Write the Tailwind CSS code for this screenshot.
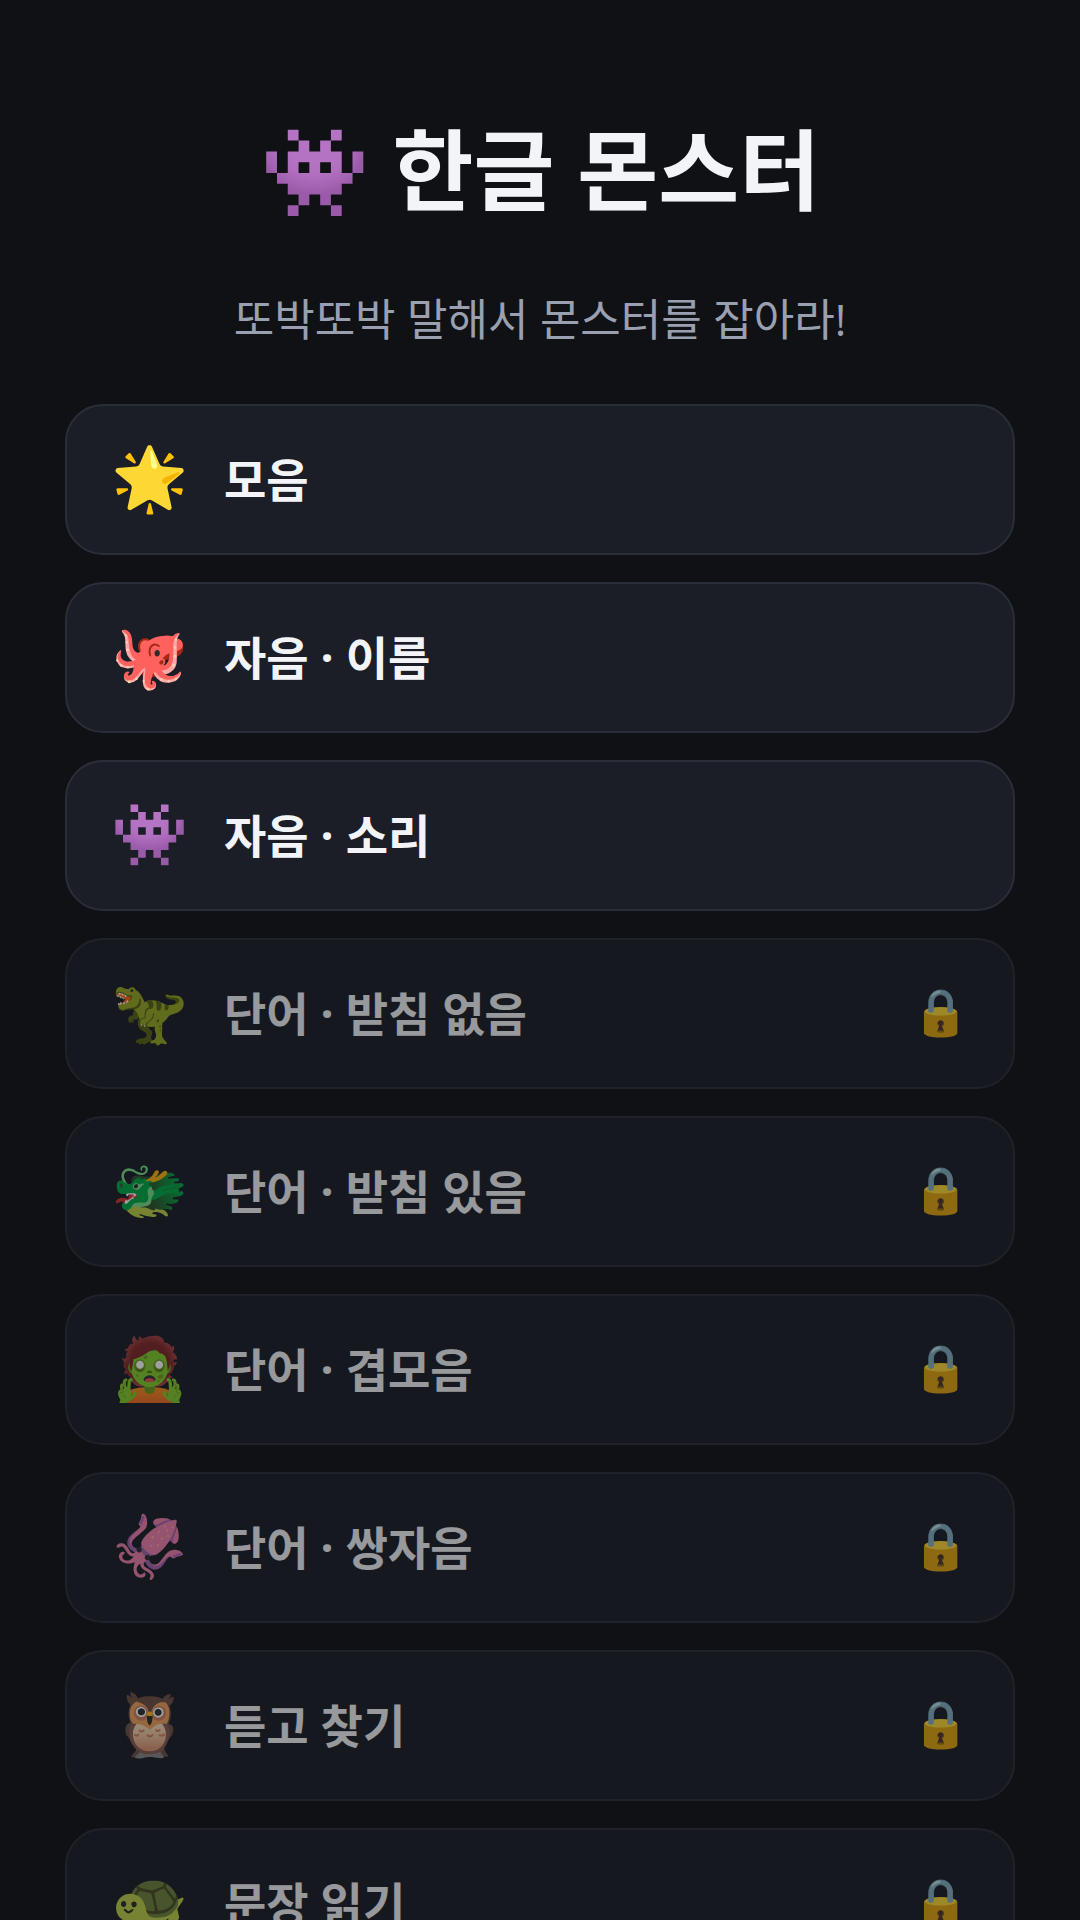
<!DOCTYPE html>
<html lang="ko">
<head>
<meta charset="utf-8">
<meta name="viewport" content="width=device-width, initial-scale=1">
<title>한글 몬스터</title>
<script src="https://cdn.jsdelivr.net/npm/@tailwindcss/browser@4"></script>
</head>
<body class="min-h-screen bg-[#0f1115] text-[#f3f4f8] font-['Open_Sans','Noto_Sans_CJK_KR',sans-serif]">
<main class="px-[65px] pt-[105px] pb-16">
  <header class="text-center">
    <h1 class="text-[88px] leading-[128px] font-bold">👾 한글 몬스터</h1>
    <p class="mt-[54px] text-[44px] leading-[64px] text-[#9aa0b0]">또박또박 말해서 몬스터를 잡아라!</p>
  </header>
  <nav class="mt-[53px] flex flex-col gap-[27px]">
    <button class="flex h-[151px] items-center gap-9 rounded-[38px] border-2 border-[#2a2e38] bg-[#1b1e26] px-11 text-left text-[46px] font-bold"><span class="pb-0.5 font-[Roboto] text-[62px] leading-none">🌟</span><span class="flex-1">모음</span></button>
    <button class="flex h-[151px] items-center gap-9 rounded-[38px] border-2 border-[#2a2e38] bg-[#1b1e26] px-11 text-left text-[46px] font-bold"><span class="pb-0.5 font-[Roboto] text-[62px] leading-none">🐙</span><span class="flex-1">자음 · 이름</span></button>
    <button class="flex h-[151px] items-center gap-9 rounded-[38px] border-2 border-[#2a2e38] bg-[#1b1e26] px-11 text-left text-[46px] font-bold"><span class="pb-0.5 font-[Roboto] text-[62px] leading-none">👾</span><span class="flex-1">자음 · 소리</span></button>
    <button disabled class="flex h-[151px] items-center gap-9 rounded-[38px] border-2 border-[#2a2e38] bg-[#1b1e26] px-11 text-left text-[46px] font-bold opacity-60"><span class="pb-0.5 font-[Roboto] text-[62px] leading-none">🦖</span><span class="flex-1">단어 · 받침 없음</span><span class="pb-1 font-[Roboto] leading-none">🔒</span></button>
    <button disabled class="flex h-[151px] items-center gap-9 rounded-[38px] border-2 border-[#2a2e38] bg-[#1b1e26] px-11 text-left text-[46px] font-bold opacity-60"><span class="pb-0.5 font-[Roboto] text-[62px] leading-none">🐲</span><span class="flex-1">단어 · 받침 있음</span><span class="pb-1 font-[Roboto] leading-none">🔒</span></button>
    <button disabled class="flex h-[151px] items-center gap-9 rounded-[38px] border-2 border-[#2a2e38] bg-[#1b1e26] px-11 text-left text-[46px] font-bold opacity-60"><span class="pb-0.5 font-[Roboto] text-[62px] leading-none">🧟</span><span class="flex-1">단어 · 겹모음</span><span class="pb-1 font-[Roboto] leading-none">🔒</span></button>
    <button disabled class="flex h-[151px] items-center gap-9 rounded-[38px] border-2 border-[#2a2e38] bg-[#1b1e26] px-11 text-left text-[46px] font-bold opacity-60"><span class="pb-0.5 font-[Roboto] text-[62px] leading-none">🦑</span><span class="flex-1">단어 · 쌍자음</span><span class="pb-1 font-[Roboto] leading-none">🔒</span></button>
    <button disabled class="flex h-[151px] items-center gap-9 rounded-[38px] border-2 border-[#2a2e38] bg-[#1b1e26] px-11 text-left text-[46px] font-bold opacity-60"><span class="pb-0.5 font-[Roboto] text-[62px] leading-none">🦉</span><span class="flex-1">듣고 찾기</span><span class="pb-1 font-[Roboto] leading-none">🔒</span></button>
    <button disabled class="flex h-[151px] items-center gap-9 rounded-[38px] border-2 border-[#2a2e38] bg-[#1b1e26] px-11 text-left text-[46px] font-bold opacity-60"><span class="pb-0.5 font-[Roboto] text-[62px] leading-none">🐢</span><span class="flex-1">문장 읽기</span><span class="pb-1 font-[Roboto] leading-none">🔒</span></button>
  </nav>
</main>
</body>
</html>
